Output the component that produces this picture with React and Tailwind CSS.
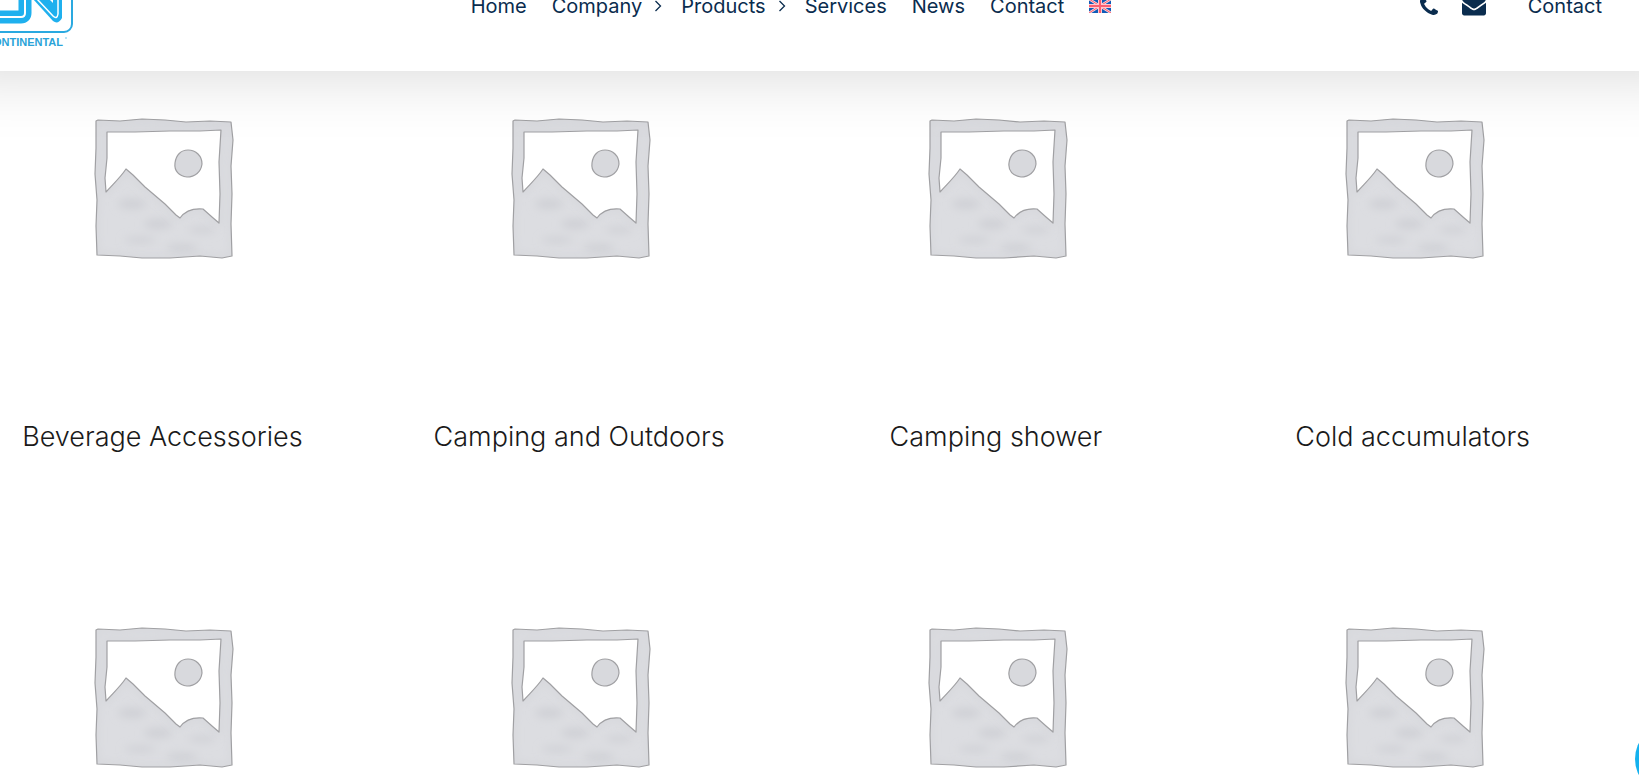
const navItems = [
  { label: 'Home', href: '#home' },
  { label: 'Company', href: '#company', hasMenu: true },
  { label: 'Products', href: '#products', hasMenu: true },
  { label: 'Services', href: '#services' },
  { label: 'News', href: '#news' },
  { label: 'Contact', href: '#contact' },
];

const categories = [
  { id: 1, title: 'Beverage Accessories' },
  { id: 2, title: 'Camping and Outdoors' },
  { id: 3, title: 'Camping shower' },
  { id: 4, title: 'Cold accumulators' },
  { id: 5 },
  { id: 6 },
  { id: 7 },
  { id: 8 },
];

const Logo = () => (
  <svg viewBox="0 0 96 84" className="w-24 h-[84px]" role="img" aria-label="Continental">
    <rect x="2" y="2" width="90" height="66" rx="8" fill="#fff" stroke="#2aa9e0" strokeWidth="2" />
    <g fill="none" strokeLinejoin="round">
      <path d="M10 10v43h31q4 0 4-4V10" stroke="#1fb0ee" strokeWidth="13" />
      <path d="M10 10v43h31q4 0 4-4V10" stroke="#fff" strokeWidth="2" />
      <path d="M53 10V35L73 57Q78 61 82 54V10z" fill="#1fb0ee" />
      <path d="M57 10V35L73 52Q77 56 78 50V10" stroke="#fff" strokeWidth="1.5" />
      <path d="M69 10V35L73 39V10z" fill="#fff" />
    </g>
    <text x="83" y="82" textAnchor="end" fontSize="11" fontWeight="700" fontFamily="Liberation Sans, sans-serif" fill="#2aa3d8">CONTINENTAL</text>
    <circle cx="86" cy="74" r="1" fill="#a5dcf3" />
  </svg>
);

const Chevron = () => (
  <svg viewBox="0 0 8 12" className="w-2 h-3" aria-hidden="true">
    <path d="M1.500 1L6.500 6L1.500 11" fill="none" stroke="currentColor" strokeWidth="1.300" />
  </svg>
);

const PhoneIcon = () => (
  <svg viewBox="0 128 1408 1408" className="w-[18px] h-[18px]" fill="currentColor" aria-hidden="true">
    <path d="M1408 1240q0 27-10 70.500t-21 68.500q-21 50-122 106-94 51-186 51-27 0-52.500-3.500t-57.500-12.500-47.500-14.500-55.500-20.500-49-18q-98-35-175-83-128-79-264.500-215.500t-215.500-264.500q-48-77-83-175-3-9-18-49t-20.500-55.500-14.500-47.500-12.500-57.500-3.500-52.500q0-92 51-186 56-101 106-122 25-11 68.500-21t70.500-10q14 0 21 3 18 6 53 76 11 19 30 54t35 63.500 31 53.500q3 4 17.500 25t21.500 35.500 7 28.500q0 20-28.500 50t-62 55-62 53-28.500 46q0 9 5 22.500t8.500 20.500 14 24 11.500 19q76 137 174 235t235 174q2 1 19 11.500t24 14 20.500 8.500 22.500 5q18 0 46-28.500t53-62 55-62 50-28.500q14 0 28.500 7t35.500 21.500 25 17.500q25 15 53.500 31t63.500 35 54 30q70 35 76 53 3 7 3 21z" />
  </svg>
);

const MailIcon = () => (
  <svg viewBox="0 256 1792 1408" className="w-6 h-5" fill="currentColor" aria-hidden="true">
    <path d="M1792 710v794q0 66-47 113t-113 47h-1472q-66 0-113-47t-47-113v-794q44 49 101 87 362 246 497 345 57 42 92.500 65.500t94.500 48 110 24.500h2q51 0 110-24.500t94.500-48 92.500-65.500q170-123 498-345 57-39 100-87zm0-294q0 79-49 151t-122 123q-376 261-468 325-10 7-42.500 31t-54 38.500-52 32.500-57.500 27-50 9h-2q-23 0-50-9t-57.500-27-52-32.500-54-38.500-42.500-31q-91-64-262-182.500t-205-142.500q-62-42-117-115.500t-55-136.500q0-78 41.500-130t118.500-52h1472q65 0 112.500 47t47.500 113z" />
  </svg>
);

const FlagUK = () => (
  <svg viewBox="0 0 22 14" className="w-[22px] h-3.5" role="img" aria-label="English">
    <path fill="#0f5cb8" d="M0 0h22v14H0z" />
    <path stroke="#ffd5da" strokeWidth="2.500" d="M0 0l22 14M22 0L0 14" />
    <path stroke="#fa5f70" strokeWidth="1" d="M0 0l22 14M22 0L0 14" />
    <path stroke="#ffc9d0" strokeWidth="4" d="M11 0v14M0 7h22" />
    <path stroke="#fa5f70" strokeWidth="2" d="M11 0v14M0 7h22" />
  </svg>
);

const frame =
  'M6 5L8 4 30 5 52 3 75 4 96 6 120 5 141 6 143 24 141 50 142 78 141 108 142 140 132 142 110 140 80 142 52 142 30 140 7 139 6 110 7 84 5 58 6 32zM17 16L17 42 15 62 16 76C23 68 30 62 36 53L43 59 55 71 75 88 86 99 90 102C95 95 102 92 113 93L122 101 129 107 130 78 129 46 131 14 110 15 80 15 45 16z';

const Placeholder = () => (
  <svg viewBox="-1 -1 146 146" className="w-[146px] h-[146px]" aria-hidden="true">
    <defs>
      <clipPath id="frame">
        <path d={frame} clipRule="evenodd" />
      </clipPath>
      <filter id="wash" x="-50%" y="-50%" width="200%" height="200%">
        <feGaussianBlur stdDeviation="4" />
      </filter>
    </defs>
    <path d={frame} fill="#dcdde1" fillRule="evenodd" />
    <g clipPath="url(#frame)">
      <g fill="#cfd0d5" filter="url(#wash)">
        <ellipse cx="42" cy="88" rx="14" ry="5" />
        <ellipse cx="68" cy="108" rx="14" ry="5" />
        <ellipse cx="50" cy="124" rx="16" ry="3" />
        <ellipse cx="92" cy="132" rx="16" ry="4" />
        <ellipse cx="112" cy="114" rx="14" ry="3" />
      </g>
      <path d={frame} fill="none" stroke="#cccdd2" strokeWidth="2" filter="url(#wash)" />
    </g>
    <g stroke="#a0a0a3" strokeWidth="1.200" strokeLinejoin="round">
      <path d={frame} fill="none" />
      <path
        d="M98 34C106 34 112 40 112 48 111 56 105 61 97 61 89 60 84 55 85 47 86 39 91 34 98 34z"
        fill="#d8d9dd"
      />
    </g>
  </svg>
);

const Header = () => (
  <header className="relative z-10 -mt-[59px] -mx-16 grid grid-cols-[1fr_auto_1fr] items-center h-[130px] pl-11 pr-[101px] bg-white text-xl text-[#0a2c4e] shadow-[0_0_68px_rgba(0,0,0,0.17)]">
    <a href="#home" className="justify-self-start">
      <Logo />
    </a>
    <nav className="flex items-center gap-[25px]">
      {navItems.map((item) => (
        <a key={item.label} href={item.href} className={item.hasMenu ? 'flex items-center gap-3 -mr-1.5' : 'flex items-center'}>
          {item.label}
          {item.hasMenu && <Chevron />}
        </a>
      ))}
      <a href="#en">
        <FlagUK />
      </a>
    </nav>
    <div className="flex items-center justify-self-end">
      <a href="#phone" aria-label="Phone" className="mr-6">
        <PhoneIcon />
      </a>
      <a href="#mail" aria-label="Email" className="mr-[42px]">
        <MailIcon />
      </a>
      <a href="#contact">Contact</a>
    </div>
  </header>
);

const App = () => {
  return (
    <div className="flex flex-col overflow-hidden bg-white font-['Inter',sans-serif]">
      <Header />
      <main className="grid grid-cols-4 gap-y-[169px] -ml-[46px] mr-[18px] pt-11">
        {categories.map((item) => (
          <a key={item.id} href="#category" className="flex flex-col items-center">
            <Placeholder />
            {item.title && (
              <h2 className="mt-[158px] text-[27px] leading-9 font-light text-[#1a1a1a]">{item.title}</h2>
            )}
          </a>
        ))}
      </main>
      <button
        type="button"
        aria-label="Open chat"
        className="fixed -right-[68px] -bottom-3.5 w-[72px] h-[72px] rounded-full bg-[#14b1ee]"
      />
    </div>
  );
};

export default App;
